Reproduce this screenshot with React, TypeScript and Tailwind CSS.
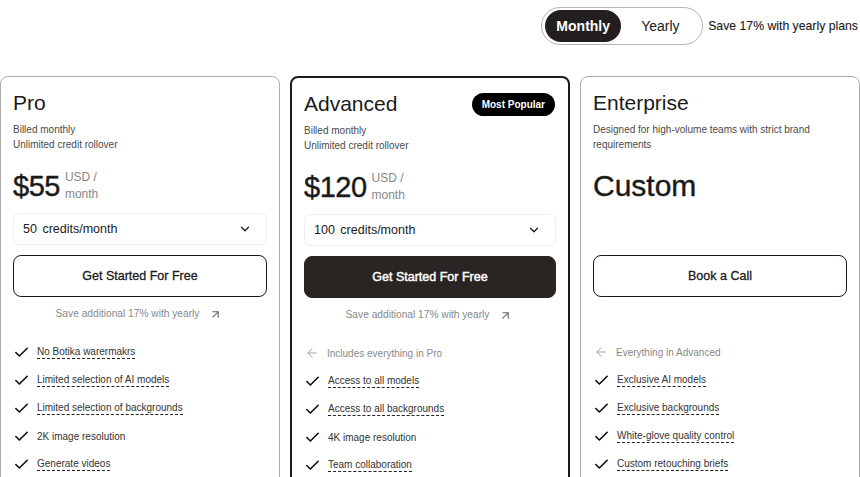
import { ArrowLeft, ArrowUpRight, Check, ChevronDown } from "lucide-react";

type Plan = {
  name: string;
  desc: string[];
  price?: string;
  custom?: string;
  credits?: string;
  cta: string;
  featured?: boolean;
  includes?: string;
  features: { label: string; dashed: boolean }[];
};

const plans: Plan[] = [
  {
    name: "Pro",
    desc: ["Billed monthly", "Unlimited credit rollover"],
    price: "$55",
    credits: "50 credits/month",
    cta: "Get Started For Free",
    features: [
      { label: "No Botika warermakrs", dashed: true },
      { label: "Limited selection of AI models", dashed: true },
      { label: "Limited selection of backgrounds", dashed: true },
      { label: "2K image resolution", dashed: false },
      { label: "Generate videos", dashed: true },
    ],
  },
  {
    name: "Advanced",
    desc: ["Billed monthly", "Unlimited credit rollover"],
    price: "$120",
    credits: "100 credits/month",
    cta: "Get Started For Free",
    featured: true,
    includes: "Includes everything in Pro",
    features: [
      { label: "Access to all models", dashed: true },
      { label: "Access to all backgrounds", dashed: true },
      { label: "4K image resolution", dashed: false },
      { label: "Team collaboration", dashed: true },
    ],
  },
  {
    name: "Enterprise",
    desc: ["Designed for high-volume teams with strict brand", "requirements"],
    custom: "Custom",
    cta: "Book a Call",
    includes: "Everything in Advanced",
    features: [
      { label: "Exclusive AI models", dashed: true },
      { label: "Exclusive backgrounds", dashed: true },
      { label: "White-glove quality control", dashed: true },
      { label: "Custom retouching briefs", dashed: true },
    ],
  },
];

const PlanCard = ({ plan }: { plan: Plan }) => {
  return (
    <div
      className={
        plan.featured
          ? "w-[280px] h-[430px] shrink-0 rounded-lg border-2 border-[#1c1c1c] bg-white px-[12px] pt-[12px] flex flex-col"
          : "w-[280px] h-[430px] shrink-0 rounded-lg border border-[#aeaeae] bg-white px-[12px] pt-[12px] flex flex-col"
      }
    >
      <div className="h-[28px] flex items-center justify-between">
        <h2 className="text-[21px] leading-[28px] text-[#1a1a1a]">{plan.name}</h2>
        {plan.featured && (
          <span className="mr-[1px] h-[23px] px-[10px] rounded-full bg-black text-white text-[10px] font-bold flex items-center">
            Most Popular
          </span>
        )}
      </div>
      <div className="mt-[5px] text-[10px] leading-[15px] text-[#4a4a4a]">
        {plan.desc.map((d) => (
          <p key={d}>{d}</p>
        ))}
      </div>
      <div className="mt-[17px] h-[34px] flex items-center">
        {plan.price ? (
          <>
            <span className="text-[29px] leading-none tracking-[-0.5px] text-[#1a1a1a] [-webkit-text-stroke:0.4px_#1a1a1a]">
              {plan.price}
            </span>
            <span className="ml-[5px] text-[12px] leading-[17px] text-[#888]">
              USD /<br />
              month
            </span>
          </>
        ) : (
          <span className="text-[30px] leading-none text-[#1a1a1a] [-webkit-text-stroke:0.4px_#1a1a1a]">
            {plan.custom}
          </span>
        )}
      </div>
      {plan.credits ? (
        <div className="mt-[10px] h-[32px] rounded-md border border-[#efefef] pl-[9px] pr-[14px] flex items-center justify-between">
          <span className="text-[12.5px] text-[#1a1a1a] [word-spacing:2px]">{plan.credits}</span>
          <ChevronDown size={14} strokeWidth={2.2} className="text-[#1a1a1a]" />
        </div>
      ) : (
        <div className="mt-[10px] h-[32px]" />
      )}
      <button
        className={
          plan.featured
            ? "mt-[10px] h-[42px] rounded-lg border border-[#2a2523] bg-[#2a2523] text-white text-[12.5px] [-webkit-text-stroke:0.45px_#fff]"
            : "mt-[10px] h-[42px] rounded-lg border border-[#1a1a1a] bg-white text-[#1a1a1a] text-[12.5px] [-webkit-text-stroke:0.3px_#1a1a1a]"
        }
      >
        {plan.cta}
      </button>
      {plan.credits ? (
        <div className="mt-[10px] h-[14px] flex items-center justify-center gap-[10px] pr-[2px] text-[10.2px] text-[#888]">
          <span>Save additional 17% with yearly</span>
          <ArrowUpRight size={13} strokeWidth={2} className="text-[#666]" />
        </div>
      ) : (
        <div className="mt-[10px] h-[14px]" />
      )}
      <ul className="mt-[17px] flex flex-col">
        {plan.includes && (
          <li className="h-[28px] flex items-center gap-[8px] pl-[1px] text-[10px] text-[#888]">
            <ArrowLeft size={14} strokeWidth={1.6} className="text-[#999]" />
            <span>{plan.includes}</span>
          </li>
        )}
        {plan.features.map((f) => (
          <li key={f.label} className="h-[28px] flex items-center gap-[7px]">
            <Check size={17} strokeWidth={2.3} className="text-[#111]" />
            <span
              className={
                f.dashed
                  ? "text-[10px] leading-[13px] text-[#333] border-b border-dashed border-[#222]"
                  : "text-[10px] leading-[13px] text-[#333]"
              }
            >
              {f.label}
            </span>
          </li>
        ))}
      </ul>
    </div>
  );
};

export default function App() {
  return (
    <div className="w-[860px] h-[477px] overflow-hidden bg-white font-['Liberation_Sans',Arial,sans-serif] pt-[7px]">
      <div className="flex items-center justify-end pr-[2px]">
        <div className="h-[38px] w-[162px] rounded-full border border-[#b5b5b5] pl-[3px] flex items-center">
          <span className="h-[32px] w-[76px] rounded-full bg-[#231f1e] text-white text-[14px] font-bold flex items-center justify-center">
            Monthly
          </span>
          <span className="ml-[20px] text-[14px] text-[#1a1a1a]">Yearly</span>
        </div>
        <span className="ml-[5px] text-[12.25px] text-[#1a1a1a] [-webkit-text-stroke:0.1px_#1a1a1a]">
          Save 17% with yearly plans
        </span>
      </div>
      <div className="mt-[31px] flex gap-[10px]">
        {plans.map((p) => (
          <PlanCard key={p.name} plan={p} />
        ))}
      </div>
    </div>
  );
}
